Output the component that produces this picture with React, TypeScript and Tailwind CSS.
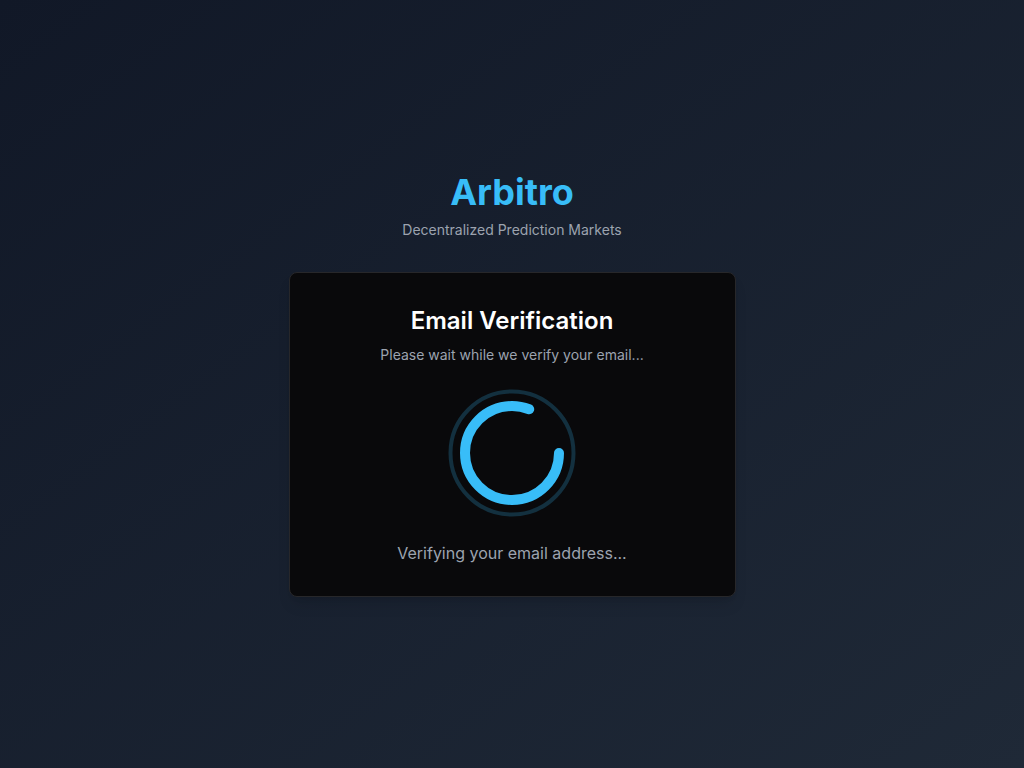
import React from "react";

function Spinner() {
  const r = 47;
  const c = 2 * Math.PI * r;
  const dash = (291 / 360) * c;
  return (
    <svg width="128" height="128" viewBox="0 0 128 128" className="block">
      <circle cx="64" cy="64" r="61.5" fill="none" stroke="#13303f" strokeWidth="4" />
      <circle
        cx="64"
        cy="64"
        r={r}
        fill="none"
        stroke="#38bdf8"
        strokeWidth="10"
        strokeLinecap="round"
        strokeDasharray={`${dash} ${c}`}
      />
    </svg>
  );
}

export default function App() {
  return (
    <div
      className="min-h-screen w-full flex items-center justify-center bg-linear-to-br from-[#111827] to-[#1f2937]"
      style={{ fontFamily: "Inter, 'Noto Sans', sans-serif" }}
    >
      <div className="flex flex-col items-center">
        <h1 className="text-4xl leading-10 font-bold text-[#38bdf8]">Arbitro</h1>
        <p className="mt-2 text-sm leading-5 text-[#9ca3af]">Decentralized Prediction Markets</p>
        <div className="mt-8 w-[447px] rounded-lg border border-[#27272a] bg-[#09090b] shadow-lg flex flex-col items-center pt-8 pb-[31px]">
          <h2 className="text-2xl leading-8 font-semibold text-white">Email Verification</h2>
          <p className="mt-2 text-sm leading-5 text-[#9ca3af]">Please wait while we verify your email...</p>
          <div className="mt-6">
            <Spinner />
          </div>
          <p className="mt-6 text-base leading-6 text-[#9ca3af]">Verifying your email address...</p>
        </div>
      </div>
    </div>
  );
}
